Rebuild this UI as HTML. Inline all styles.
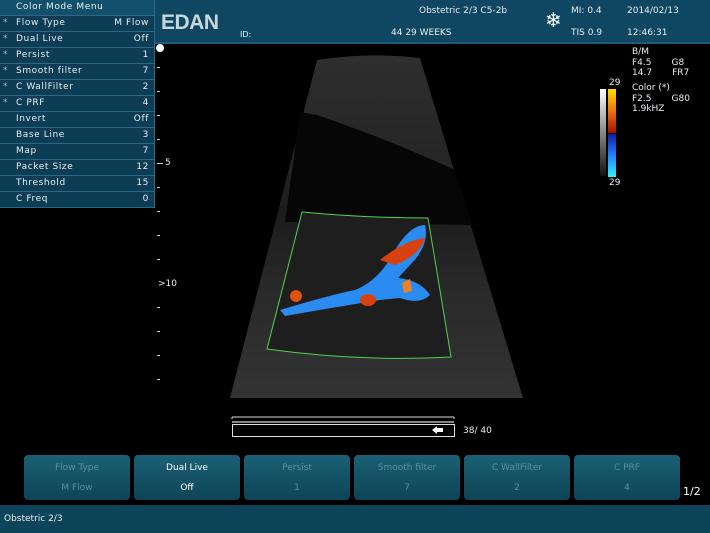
<!DOCTYPE html>
<html><head><style>
body{margin:0;width:710px;height:533px;background:#000;position:relative;overflow:hidden;font-family:"DejaVu Sans","Liberation Sans",sans-serif;color:#e6eef2}
.a{position:absolute}
#hdr{left:155px;top:0;width:555px;height:42px;background:#0f4661;border-bottom:2px solid #1e5d78}
#menu{left:0;top:0;width:154px;height:208px;background:#0d3c55;border-right:1px solid #2b6a88}
.row{position:absolute;left:0;width:154px;height:15px;border-bottom:1px solid #2a6886;font-size:9px;line-height:15px;letter-spacing:.6px}
.row .k{position:absolute;left:16px}.row .v{position:absolute;right:5px}.row .s{position:absolute;left:3px;color:#9bc}
.btn{position:absolute;top:455px;width:106px;height:45px;border-radius:4px;background:linear-gradient(#1b6075,#0e4457);font-size:9px;text-align:center;color:#5a8fa0}
.btn div{margin-top:8px}.btn div+div{margin-top:10px}
.t{font-size:9px;position:absolute;white-space:pre}
</style></head><body>
<div class="a" id="hdr"></div>
<div class="a" style="left:161px;top:11px;font:bold 21px 'Liberation Sans',sans-serif;color:#c9d6dc;letter-spacing:-.5px">EDAN</div>
<div class="t" style="left:240px;top:30px;font-size:8px">ID:</div>
<div class="t" style="left:419px;top:6px">Obstetric 2/3 C5-2b</div>
<div class="t" style="left:391px;top:28px">44 29 WEEKS</div>
<div class="a" style="left:545px;top:10px;font-size:20px;color:#fff;line-height:20px">❄</div>
<div class="t" style="left:571px;top:6px">MI: 0.4</div>
<div class="t" style="left:571px;top:28px">TIS 0.9</div>
<div class="t" style="left:627px;top:6px">2014/02/13</div>
<div class="t" style="left:627px;top:28px">12:46:31</div>
<div id="menu" class="a">
<div class="row" style="top:0;background:#12506b"><span class="k">Color Mode Menu</span></div>
<div class="row" style="top:16px"><span class="s">*</span><span class="k">Flow Type</span><span class="v">M Flow</span></div>
<div class="row" style="top:32px"><span class="s">*</span><span class="k">Dual Live</span><span class="v">Off</span></div>
<div class="row" style="top:48px"><span class="s">*</span><span class="k">Persist</span><span class="v">1</span></div>
<div class="row" style="top:64px"><span class="s">*</span><span class="k">Smooth filter</span><span class="v">7</span></div>
<div class="row" style="top:80px"><span class="s">*</span><span class="k">C WallFilter</span><span class="v">2</span></div>
<div class="row" style="top:96px"><span class="s">*</span><span class="k">C PRF</span><span class="v">4</span></div>
<div class="row" style="top:112px"><span class="k">Invert</span><span class="v">Off</span></div>
<div class="row" style="top:128px"><span class="k">Base Line</span><span class="v">3</span></div>
<div class="row" style="top:144px"><span class="k">Map</span><span class="v">7</span></div>
<div class="row" style="top:160px"><span class="k">Packet Size</span><span class="v">12</span></div>
<div class="row" style="top:176px"><span class="k">Threshold</span><span class="v">15</span></div>
<div class="row" style="top:192px"><span class="k">C Freq</span><span class="v">0</span></div>
</div>
<svg class="a" style="left:0;top:0" width="710" height="533">
<defs>
<linearGradient id="g" x1="0" y1="0" x2="0" y2="1"><stop offset="0" stop-color="#2e2e2e"/><stop offset=".3" stop-color="#262626"/><stop offset=".45" stop-color="#1c1c1c"/><stop offset=".7" stop-color="#2a2a2a"/><stop offset="1" stop-color="#333"/></linearGradient>
<linearGradient id="cb1" x1="0" y1="0" x2="0" y2="1"><stop offset="0" stop-color="#ffe000"/><stop offset=".5" stop-color="#f07010"/><stop offset="1" stop-color="#a01000"/></linearGradient>
<linearGradient id="cb2" x1="0" y1="0" x2="0" y2="1"><stop offset="0" stop-color="#1020a0"/><stop offset=".5" stop-color="#2080ff"/><stop offset="1" stop-color="#30f0ff"/></linearGradient>
<linearGradient id="cbg" x1="0" y1="0" x2="0" y2="1"><stop offset="0" stop-color="#fff"/><stop offset="1" stop-color="#111"/></linearGradient>
</defs>
<path d="M317 60 Q370 52 420 58 L523 398 L230 398 Z" fill="url(#g)"/>
<path d="M300 112 L317 115 Q390 140 455 170 L472 225 L285 222 Z" fill="#060606"/>
<path d="M302 212 Q365 218 428 218 L451 357 Q360 362 267 349 Z" fill="#1e1e1e" stroke="#4fd34f" stroke-width="1"/>
<path d="M280 310 Q330 295 355 290 Q380 280 395 250 Q410 225 425 225 Q430 245 410 265 L398 278 Q420 280 430 295 Q420 305 400 298 L380 300 Q330 308 285 316 Z" fill="#2a8cf0"/>
<path d="M380 260 Q405 240 425 238 Q420 255 395 265 Z" fill="#d84010"/>
<path d="M290 296 a6 6 0 1 0 12 0 a6 6 0 1 0 -12 0 Z" fill="#e05010"/>
<path d="M360 300 a8 6 0 1 0 16 0 a8 6 0 1 0 -16 0 Z" fill="#d84010"/>
<path d="M402 283 l8 -4 l2 12 l-8 2 Z" fill="#f08020"/>
<rect x="600" y="89" width="6" height="87" fill="url(#cbg)"/>
<rect x="608" y="89" width="8" height="44" fill="url(#cb1)"/>
<rect x="608" y="134" width="8" height="43" fill="url(#cb2)"/>
<circle cx="160" cy="48" r="4" fill="#fff"/>
<g fill="#ccc"><rect x="157" y="67" width="3" height="1"/><rect x="157" y="91" width="3" height="1"/><rect x="157" y="115" width="3" height="1"/><rect x="157" y="139" width="3" height="1"/><rect x="157" y="163" width="6" height="1"/><rect x="157" y="187" width="3" height="1"/><rect x="157" y="211" width="3" height="1"/><rect x="157" y="235" width="3" height="1"/><rect x="157" y="259" width="3" height="1"/><rect x="157" y="307" width="3" height="1"/><rect x="157" y="331" width="3" height="1"/><rect x="157" y="355" width="3" height="1"/><rect x="157" y="379" width="3" height="1"/></g>
<path d="M232 419 v-2 M232 417 h222 M454 417 v2" stroke="#ddd" fill="none"/>
<rect x="232.5" y="424.5" width="222" height="12" fill="none" stroke="#ddd"/>
<rect x="232" y="421" width="222" height="2" fill="#888"/>
<path d="M432 430 l5 -4 v2 h6 v4 h-6 v2 Z" fill="#fff"/>
<path d="M630 519 q5 -5 10 0 q5 5 10 0" stroke="#e8e070" stroke-width="1.5" fill="none"/>
<rect x="669" y="514" width="16" height="10" fill="#4a4" stroke="#ddd"/><circle cx="682" cy="522" r="3" fill="#d33"/>
</svg>
<div class="t" style="left:165px;top:158px">5</div>
<div class="t" style="left:158px;top:279px">&gt;10</div>
<div class="t" style="left:609px;top:78px">29</div>
<div class="t" style="left:609px;top:178px">29</div>
<div class="t" style="left:632px;top:47px;line-height:10.5px">B/M
F4.5       G8
14.7       FR7</div>
<div class="t" style="left:632px;top:83px;line-height:10.5px">Color (*)
F2.5       G80
1.9kHZ</div>
<div class="t" style="left:463px;top:426px">38/ 40</div>
<div class="btn" style="left:24px"><div>Flow Type</div><div>M Flow</div></div>
<div class="btn" style="left:134px;color:#fff"><div>Dual Live</div><div>Off</div></div>
<div class="btn" style="left:244px"><div>Persist</div><div>1</div></div>
<div class="btn" style="left:354px"><div>Smooth filter</div><div>7</div></div>
<div class="btn" style="left:464px"><div>C WallFilter</div><div>2</div></div>
<div class="btn" style="left:574px"><div>C PRF</div><div>4</div></div>
<div class="t" style="left:683px;top:485px;font-size:11px;color:#fff">1/2</div>
<div class="a" style="left:0;top:505px;width:710px;height:28px;background:#0e4459"></div>
<div class="t" style="left:4px;top:514px">Obstetric 2/3</div>
</body></html>
